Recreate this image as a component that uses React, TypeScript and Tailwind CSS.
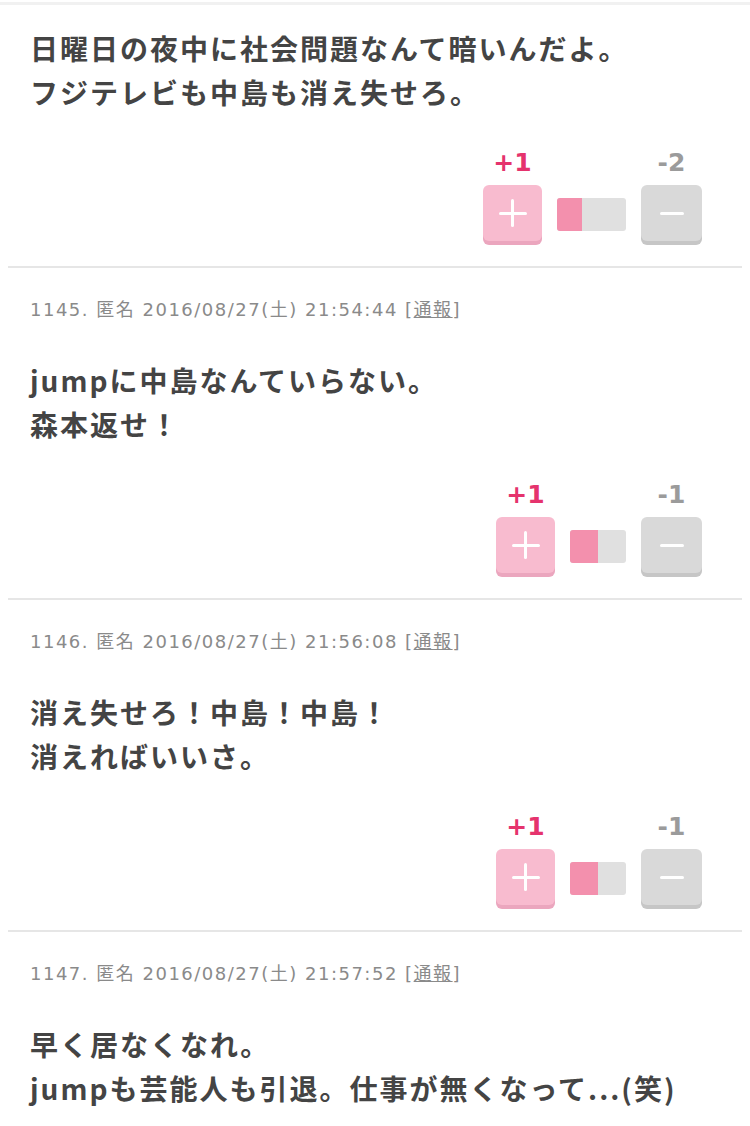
import React from 'react';

type Comment = {
  no?: number;
  time?: string;
  lines: string[];
  plus?: number;
  minus?: number;
  barW?: string;
  fillW?: string;
};

const comments: Comment[] = [
  {
    lines: ['日曜日の夜中に社会問題なんて暗いんだよ。', 'フジテレビも中島も消え失せろ。'],
    plus: 1,
    minus: 2,
    barW: 'w-[69px]',
    fillW: 'w-[25px]',
  },
  {
    no: 1145,
    time: '2016/08/27(土) 21:54:44',
    lines: ['jumpに中島なんていらない。', '森本返せ！'],
    plus: 1,
    minus: 1,
    barW: 'w-[56px]',
    fillW: 'w-[28px]',
  },
  {
    no: 1146,
    time: '2016/08/27(土) 21:56:08',
    lines: ['消え失せろ！中島！中島！', '消えればいいさ。'],
    plus: 1,
    minus: 1,
    barW: 'w-[56px]',
    fillW: 'w-[28px]',
  },
  {
    no: 1147,
    time: '2016/08/27(土) 21:57:52',
    lines: ['早く居なくなれ。', 'jumpも芸能人も引退。仕事が無くなって...(笑)'],
  },
];

const bodyFont = '[font-family:Noto_Sans_CJK_JP,Noto_Sans,sans-serif]';
const metaFont = '[font-family:DejaVu_Sans,Noto_Sans_CJK_JP,sans-serif]';

const Votes: React.FC<{ c: Comment }> = ({ c }) => (
  <div className="flex justify-end pr-[18px] mt-[34px]">
    <div className="flex items-end">
      {/* plus */}
      <div className="flex flex-col items-center">
        <span className={`${metaFont} font-bold text-[25px] leading-[30px] text-[#e5336d]`}>+{c.plus}</span>
        <button className="mt-[7px] w-[59px] h-[56px] mb-[4px] rounded-[6px] bg-[#f8bbcf] shadow-[0_4px_0_#eba6be] flex items-center justify-center relative">
          <span className="block w-[28px] h-[3px] bg-white rounded-full" />
          <span className="absolute w-[3px] h-[28px] bg-white rounded-full" />
        </button>
      </div>
      {/* ratio bar */}
      <div className={`${c.barW} h-[33px] mx-[15px] mb-[14px] rounded-[3px] overflow-hidden bg-[#e0e0e0] flex`}>
        <div className={`${c.fillW} h-full bg-[#f390ad]`} />
      </div>
      {/* minus */}
      <div className="flex flex-col items-center">
        <span className={`${metaFont} font-bold text-[25px] leading-[30px] text-[#9b9b9b]`}>-{c.minus}</span>
        <button className="mt-[7px] w-[61px] h-[56px] mb-[4px] rounded-[6px] bg-[#d9d9d9] shadow-[0_4px_0_#c6c6c6] flex items-center justify-center">
          <span className="block w-[24px] h-[3px] bg-white rounded-full" />
        </button>
      </div>
    </div>
  </div>
);

const CommentItem: React.FC<{ c: Comment }> = ({ c }) => (
  <div className="mx-2 border-b-2 border-[#e6e6e6] px-[22px] pb-[21px]">
    {c.no && (
      <div className={`${metaFont} pt-[29px] text-[18px] leading-[26px] tracking-[1.5px] text-[#8a8a8a]`}>
        {c.no}. 匿名 {c.time} [<span className="underline">通報</span>]
      </div>
    )}
    <div
      className={`${bodyFont} ${c.no ? 'mt-[35px]' : 'pt-[21px]'} font-bold text-[28px] leading-[44px] text-[#444444] tracking-[2px]`}
    >
      {c.lines.map((l) => (
        <div key={l}>{l}</div>
      ))}
    </div>
    {c.plus !== undefined && <Votes c={c} />}
  </div>
);

export default function App() {
  return (
    <div className="w-[750px] h-[1126px] overflow-hidden bg-white">
      <div className="mt-[2px] h-[3px] bg-[#f1f1f1]" />
      {comments.map((c, i) => (
        <CommentItem key={i} c={c} />
      ))}
    </div>
  );
}
